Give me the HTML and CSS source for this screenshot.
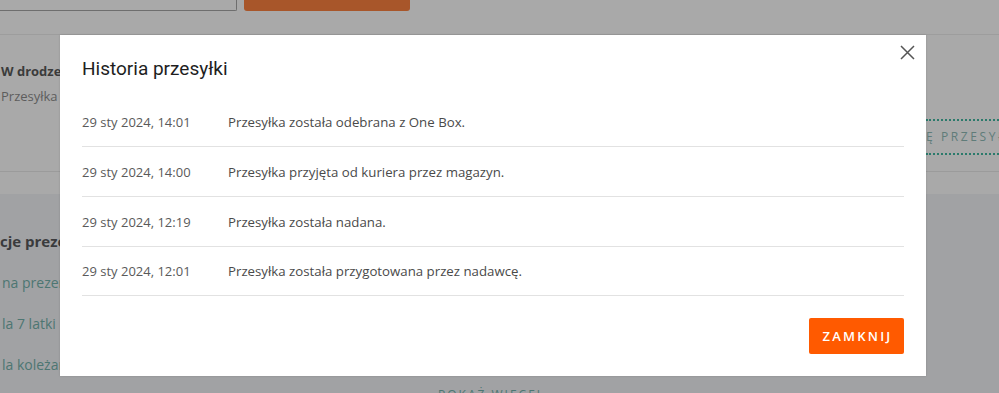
FILE: index.html
```html
<!DOCTYPE html>
<html lang="pl">
<head>
<meta charset="utf-8">
<title>Historia przesyłki</title>
<link rel="stylesheet" href="styles.css">
</head>
<body>
<div class="page">
  <div class="topbar">
    <div class="search-input"></div>
    <div class="search-btn"></div>
  </div>
  <div class="card">
    <div class="card-info">
      <div class="status">W drodze</div>
      <div class="status-sub">Przesyłka w drodze</div>
    </div>
    <div class="track-link">Ę PRZESYŁKĘ</div>
  </div>
  <div class="gap"></div>
  <div class="section">
    <div class="section-title">cje prezentowe</div>
    <div class="section-item">na prezent</div>
    <div class="section-item">la 7 latki na urodziny</div>
    <div class="section-item">la koleżanki</div>
    <div class="more">POKAŻ WIĘCEJ</div>
  </div>
</div>

<div class="modal">
  <div class="modal-head">
    <h2 class="modal-title">Historia przesyłki</h2>
    <button class="modal-close" aria-label="Zamknij">
      <svg width="15" height="15" viewBox="0 0 15 15"><path d="M1 1 L14 14 M14 1 L1 14" stroke="#555" stroke-width="1.5" fill="none"/></svg>
    </button>
  </div>
  <ul class="history">
    <li class="row"><span class="date">29 sty 2024, 14:01</span><span class="desc">Przesyłka została odebrana z One Box.</span></li>
    <li class="row"><span class="date">29 sty 2024, 14:00</span><span class="desc">Przesyłka przyjęta od kuriera przez magazyn.</span></li>
    <li class="row"><span class="date">29 sty 2024, 12:19</span><span class="desc">Przesyłka została nadana.</span></li>
    <li class="row"><span class="date">29 sty 2024, 12:01</span><span class="desc">Przesyłka została przygotowana przez nadawcę.</span></li>
  </ul>
  <div class="modal-foot">
    <button class="btn-close">ZAMKNIJ</button>
  </div>
</div>
</body>
</html>
```
FILE: styles.css
```css
* { box-sizing: border-box; }
html, body { margin: 0; padding: 0; }
body {
  width: 999px;
  height: 393px;
  overflow: hidden;
  background: #a1a2a4;
  font-family: "Open Sans", "Liberation Sans", sans-serif;
  position: relative;
}
.page { width: 999px; }
.topbar {
  height: 35px;
  background: #a9a9a9;
  border-bottom: 1px solid #9d9d9d;
  display: flex;
  align-items: flex-start;
  gap: 7px;
}
.search-input {
  width: 237px;
  height: 11px;
  border: 1px solid #6e6e6e;
  border-top: none;
  border-left: none;
  border-radius: 0 0 2px 0;
}
.search-btn {
  width: 166px;
  height: 11px;
  background: #a8562a;
  border-radius: 0 0 3px 3px;
}
.card {
  height: 137px;
  background: #a9a9a9;
  border-bottom: 1px solid #9b9b9b;
  display: flex;
  justify-content: space-between;
  align-items: flex-start;
}
.card-info { padding: 27px 0 0 1px; }
.status { font-size: 13px; font-weight: 700; color: #3b3b3b; line-height: 18px; }
.status-sub { font-size: 13px; color: #5d5d5d; margin-top: 7px; line-height: 18px; }
.track-link {
  margin-top: 84px;
  width: 73px;
  height: 36px;
  border-top: 2px dotted #2b7a6b;
  border-bottom: 2px dotted #2b7a6b;
  color: #5f7c79;
  font-size: 12px;
  letter-spacing: 2.6px;
  line-height: 32px;
  white-space: nowrap;
  overflow: hidden;
}
.gap { height: 22px; background: #a9a9a9; }
.section { padding: 36px 0 0 0; position: relative; }
.section-title { font-size: 15px; font-weight: 700; color: #3a3b3d; line-height: 22px; }
.section-item { font-size: 14px; color: #4d7672; line-height: 20px; margin-top: 21px; padding-left: 2px; }
.section-item:first-of-type { margin-top: 20px; }
.more {
  position: absolute;
  left: 438px;
  top: 192px;
  font-size: 12px;
  letter-spacing: 2px;
  color: #4d7672;
}

.modal {
  position: absolute;
  left: 60px;
  top: 35px;
  width: 866px;
  height: 341px;
  background: #fff;
  box-shadow: 0 0 2px rgba(0,0,0,0.15);
  padding: 0 22px 0 22px;
  display: flex;
  flex-direction: column;
}
.modal-head {
  display: flex;
  justify-content: space-between;
  align-items: flex-start;
  height: 62px;
}
.modal-title {
  margin: 21px 0 0 0;
  font-family: Roboto, "Liberation Sans", sans-serif;
  font-weight: 400;
  font-size: 19px;
  line-height: 26px;
  color: #1e1e1e;
}
.modal-close {
  border: none;
  background: none;
  padding: 0;
  margin: 10px -11px 0 0;
  width: 15px;
  height: 15px;
  display: flex;
}
.history { list-style: none; margin: 0; padding: 0; }
.row {
  display: flex;
  align-items: center;
  height: 50px;
  border-bottom: 1px solid #e2e2e2;
  font-size: 13px;
  color: #555;
}
.row:last-child { height: 49px; }
.date { width: 146px; color: #5a5a5a; }
.desc { color: #4a4a4a; font-size: 13.25px; }
.modal-foot {
  display: flex;
  justify-content: flex-end;
  padding-top: 22px;
}
.btn-close {
  width: 95px;
  height: 36px;
  border: none;
  border-radius: 2px;
  background: #ff5a00;
  color: #fff;
  font-family: "Open Sans", "Liberation Sans", sans-serif;
  font-weight: 600;
  font-size: 13px;
  letter-spacing: 2.2px;
  padding: 0 0 0 2px;
}
```
